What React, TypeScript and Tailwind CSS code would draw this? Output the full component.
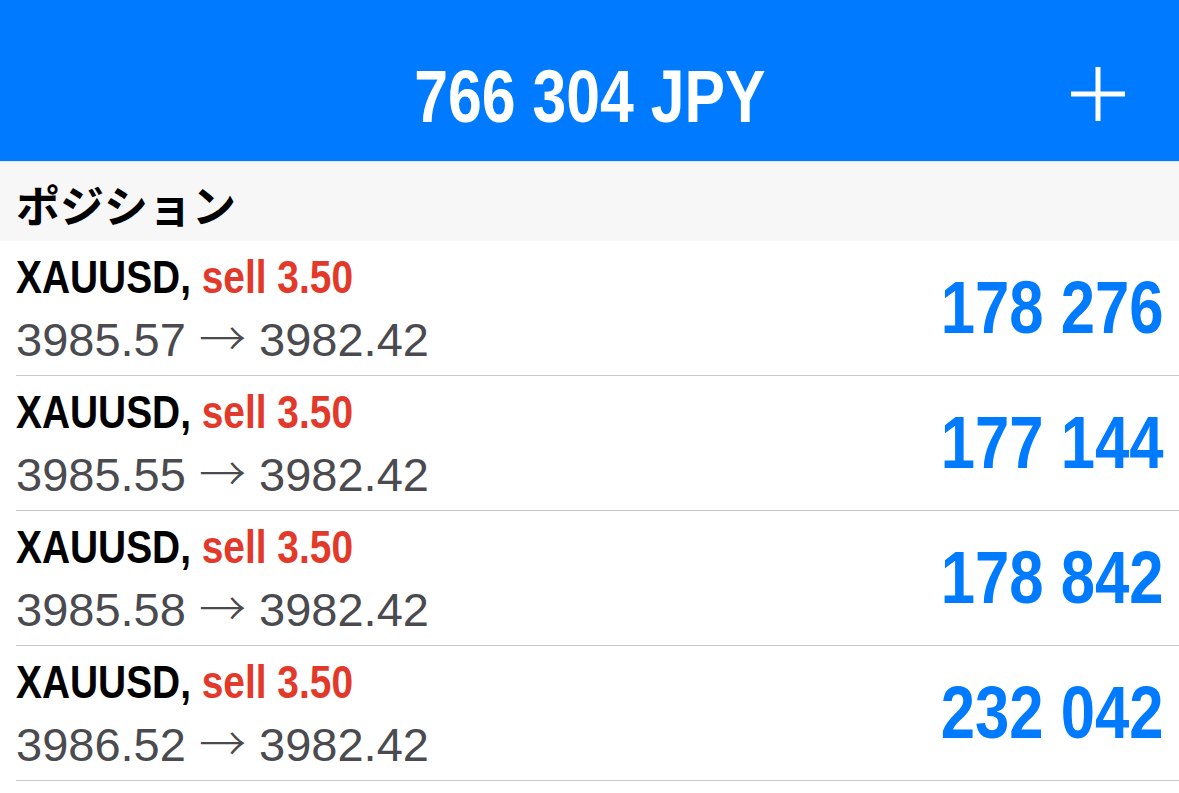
const positions = [
  { open: "3985.57", close: "3982.42", profit: "178 276" },
  { open: "3985.55", close: "3982.42", profit: "177 144" },
  { open: "3985.58", close: "3982.42", profit: "178 842" },
  { open: "3986.52", close: "3982.42", profit: "232 042" },
];

// no narrow face installed, so squeeze Liberation Sans Bold horizontally
const narrow = "font-['Liberation_Sans',Arial,sans-serif] font-bold whitespace-nowrap";

function PlusIcon() {
  return (
    <svg width="54" height="54" viewBox="0 0 54 54" fill="none">
      <path d="M27 0v54M0 27h54" stroke="white" strokeWidth="5" />
    </svg>
  );
}

export default function App() {
  return (
    <div className="w-[1179px] h-[793px] bg-white overflow-hidden">
      {/* Header */}
      <div className="h-[161px] bg-[#007aff] grid grid-cols-[1fr_auto_1fr]">
        <div />
        <div className={`pt-[60px] text-white text-[75px] leading-[73px] origin-center scale-x-[0.81] ${narrow}`}>
          766 304 JPY
        </div>
        <div className="flex justify-end pr-[54px] pt-[67px]">
          <PlusIcon />
        </div>
      </div>

      {/* Section title */}
      <div className="h-[80px] bg-[#f7f7f7] border-t border-[#e4e4e6] flex items-center pl-4 pt-1">
        <span className="text-[44px] leading-none font-bold text-black font-['Noto_Sans_CJK_JP',sans-serif]">
          ポジション
        </span>
      </div>

      {/* Positions */}
      {positions.map((p, i) => (
        <div key={i} className="pl-4">
          <div className="h-[135px] border-b border-[#c8c7cc] flex items-center justify-between pr-4">
            <div className="flex flex-col self-start pt-[12px]">
              <div className={`text-[47px] leading-[47px] origin-left scale-x-[0.827] ${narrow}`}>
                <span className="text-black">XAUUSD,</span>{" "}
                <span className="text-[#e2392a]">sell 3.50</span>
              </div>
              <div className="mt-[13px] text-[47px] leading-[46px] text-[#4a4a4f] font-['Liberation_Sans',Arial,sans-serif] whitespace-nowrap">
                {p.open}{" "}
                <span className="font-['Noto_Sans_CJK_JP',sans-serif] font-light">→</span>{" "}
                {p.close}
              </div>
            </div>
            <div className={`text-[#007aff] text-[74px] leading-none origin-right scale-x-[0.833] ${narrow}`}>
              {p.profit}
            </div>
          </div>
        </div>
      ))}
    </div>
  );
}
